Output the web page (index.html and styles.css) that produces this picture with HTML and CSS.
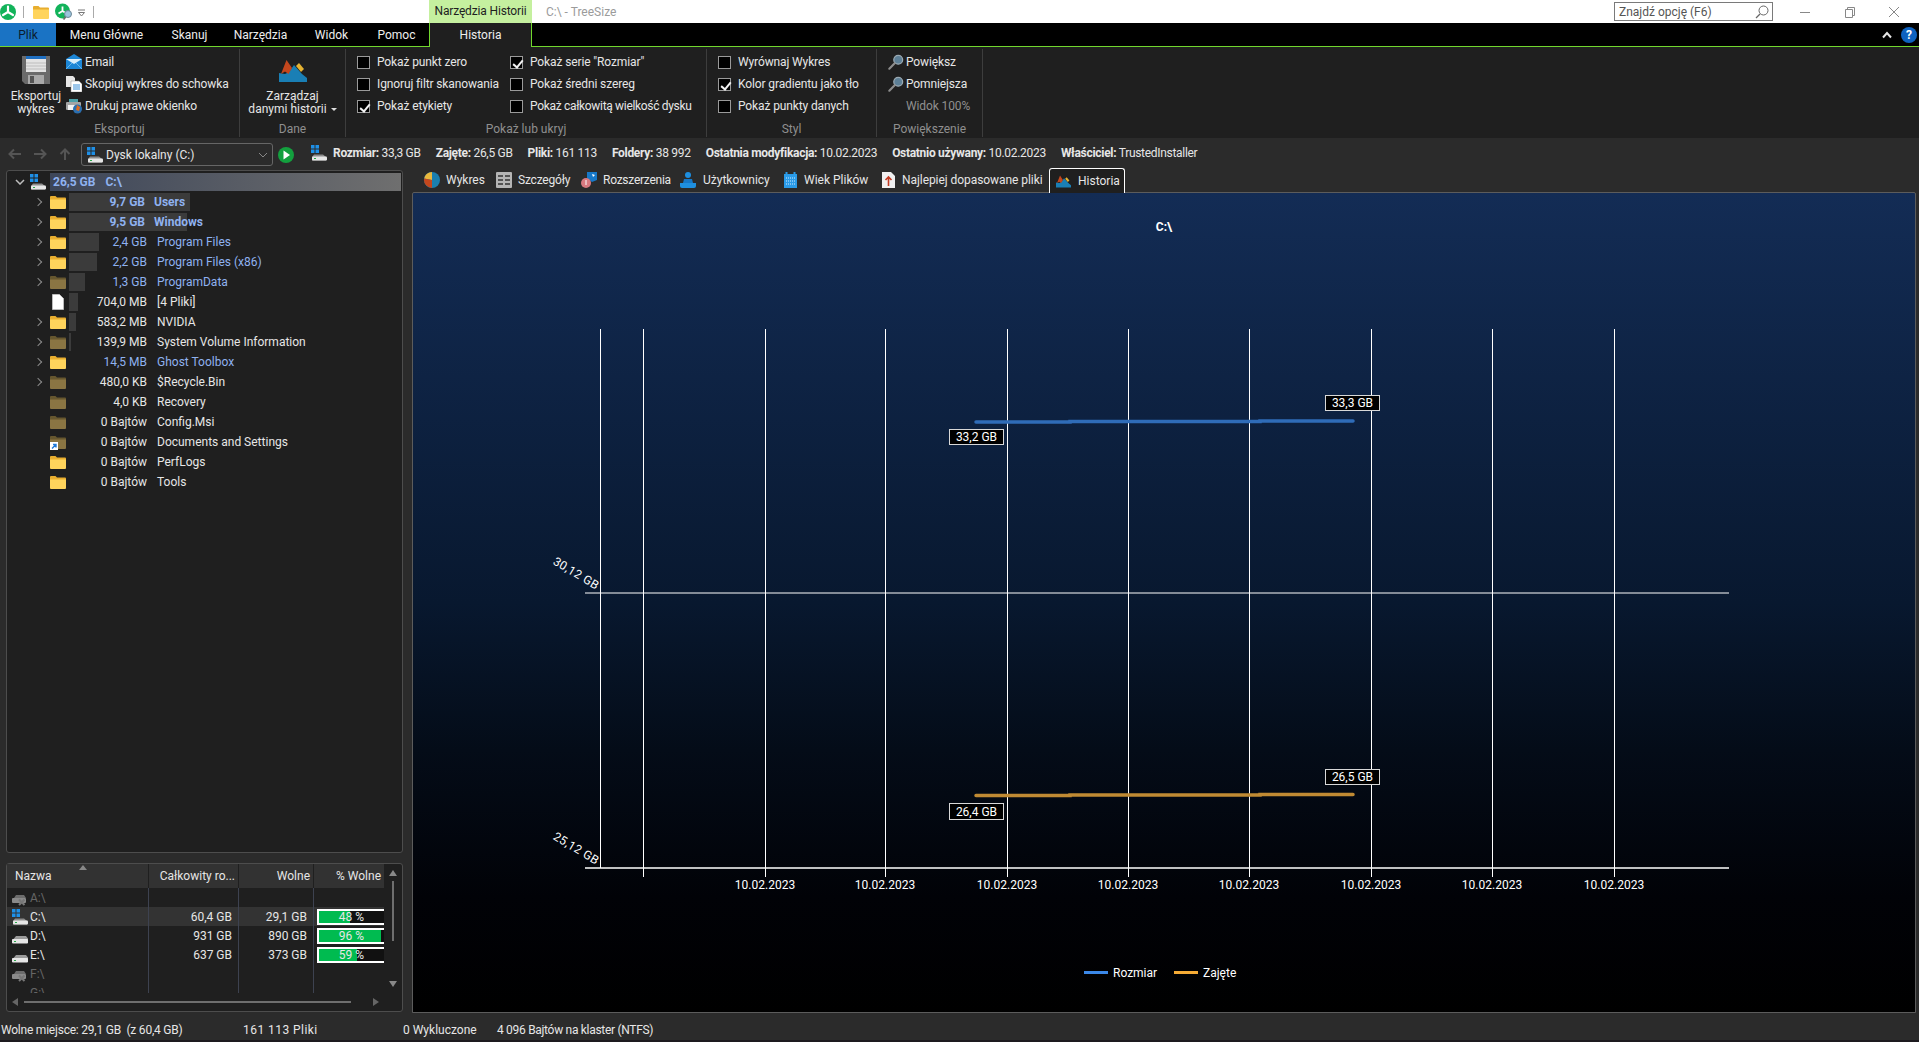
FILE: index.html
```html
<!DOCTYPE html>
<html lang="pl">
  <head>
    <meta charset="UTF-8" />
    <title>C:\ - TreeSize</title>
    <link rel="stylesheet" href="styles.css">
  </head>
  <body>
    <!-- shared icons -->
    <svg class="icon-defs" width="0" height="0">
      <defs>
        <symbol id="i-folder" viewBox="0 0 16 14">
          <path d="M0 2a1 1 0 0 1 1-1h4.500l1.500 1.500h8a1 1 0 0 1 1 1V5H0z" fill="var(--tab)"/>
          <path d="M0 4.500h16V13a1 1 0 0 1-1 1H1a1 1 0 0 1-1-1z" fill="var(--body)"/>
        </symbol>
        <symbol id="i-drive" viewBox="0 0 16 16">
          <path d="M2 10.500 4 8h10l2 2.500V15H0v-3z" fill="#9a9a9a"/>
          <rect x="0" y="11" width="16" height="4.500" rx="1" fill="#e6e6e6"/>
          <rect x="2" y="13" width="2" height="1" fill="#29a84a"/>
        </symbol>
        <symbol id="i-win" viewBox="0 0 16 16">
          <path d="M0 0h3.500v3.500H0zM4.500 0H8v3.500H4.500zM0 4.500h3.500V8H0zM4.500 4.500H8V8H4.500z" fill="#1e90e8"/>
          <path d="M3 9.500h9l3 2.500v3.500H1V12z" fill="#8c8c8c"/>
          <rect x="1" y="11.500" width="15" height="4" rx="1" fill="#e6e6e6"/>
          <rect x="3" y="13" width="2" height="1" fill="#29a84a"/>
        </symbol>
        <symbol id="i-lost" viewBox="0 0 16 16">
          <rect x="0" y="8" width="14" height="5" rx="1" fill="#8a8a8a"/>
          <path d="M2 8 4 5h8l2 3z" fill="#6c6c6c"/>
          <path d="M7 9.500 12.500 15M12.500 9.500 7 15" stroke="#777" stroke-width="2"/>
        </symbol>
        <symbol id="i-lens" viewBox="0 0 18 18">
          <circle cx="11.500" cy="6.500" r="5" fill="#5d7f96" stroke="#9aa9b2" stroke-width="1.400"/>
          <path d="M7.500 10.500 1.500 16.500" stroke="#8d8d8d" stroke-width="2.400" stroke-linecap="round"/>
        </symbol>
        <symbol id="i-peaks" viewBox="0 0 28 22">
          <path d="M0 22V13l6 1 4-2 5-7 8 9 5 4v4z" fill="#1a7fb5"/>
          <path d="M2 14 7.500 0 13 8 9.500 14 6 11.500z" fill="#c4471d"/>
          <path d="M17 6l3-3 5 6-3 3z" fill="#e5b332"/>
        </symbol>
      </defs>
    </svg>

    <header class="title-bar">
      <div class="quick-access">
        <svg class="app-logo" viewBox="0 0 16 16"><circle cx="8" cy="8" r="8" fill="#12b35a"/><path d="M8 2.500v5.500M8 8l-5 3M8 8l5 3" stroke="#fff" stroke-width="2.200" stroke-linecap="round"/></svg>
        <span class="qa-sep"></span>
        <svg class="qa-folder" width="16" height="14"><use href="#i-folder"/></svg>
        <svg class="qa-scan" viewBox="0 0 18 18"><circle cx="7.500" cy="8" r="7.500" fill="#12b35a"/><path d="M7.500 3.500v4.500M7.500 8l-4 2.500M7.500 8l4 2.500" stroke="#fff" stroke-width="1.800"/><circle cx="13" cy="11" r="3.500" fill="#9cc4dd" stroke="#6d8796"/><path d="M10.500 14 8.500 16.500" stroke="#6d6d6d" stroke-width="1.800"/></svg>
        <svg class="qa-more" viewBox="0 0 8 8"><path d="M0 1h7" stroke="#777"/><path d="M.5 3.500h6L3.500 7z" fill="none" stroke="#777"/></svg>
        <span class="qa-sep"></span>
      </div>
      <div class="context-title">Narzędzia Historii</div>
      <div class="window-title">C:\ - TreeSize</div>
      <div class="search-box">
        <span>Znajdź opcję (F6)</span>
        <svg viewBox="0 0 14 14" width="14" height="14"><circle cx="8.500" cy="5.500" r="4.500" fill="none" stroke="#666"/><path d="M5 9 1 13" stroke="#666" stroke-width="1.200"/></svg>
      </div>
      <div class="window-buttons">
        <svg viewBox="0 0 12 12" width="12" height="12"><path d="M1 6.500h10" stroke="#888"/></svg>
        <svg viewBox="0 0 12 12" width="12" height="12"><path d="M1.500 3.500h7v8h-7zM3.500 3.500v-2h7v8h-2" fill="none" stroke="#888"/></svg>
        <svg viewBox="0 0 12 12" width="12" height="12"><path d="M1 1l10 10M11 1 1 11" stroke="#888"/></svg>
      </div>
    </header>

    <nav class="menu-bar">
      <div class="menu-item menu-file">Plik</div>
      <div class="menu-item menu-w1">Menu Główne</div>
      <div class="menu-item menu-w2">Skanuj</div>
      <div class="menu-item menu-w3">Narzędzia</div>
      <div class="menu-item menu-w4">Widok</div>
      <div class="menu-item menu-w5">Pomoc</div>
      <div class="menu-item menu-context">Historia</div>
      <div class="menu-right">
        <svg viewBox="0 0 10 8" width="10" height="8"><path d="M1 6.500 5 2l4 4.500" fill="none" stroke="#e6e6e6" stroke-width="2"/></svg>
        <span class="help-dot">?</span>
      </div>
    </nav>

    <section class="ribbon">
      <div class="rb-group rb-export">
        <div class="rb-body">
          <div class="rb-big">
            <svg class="big-icon" viewBox="0 0 30 30" width="30" height="30">
              <path d="M1 1h28v28H4l-3-3z" fill="#6b6b6b"/>
              <rect x="5" y="1" width="20" height="3" fill="#1f6fc0"/>
              <rect x="5" y="4" width="20" height="13" fill="#e3e3e3"/>
              <path d="M5 8h20M5 11h20M5 14h20" stroke="#bdbdbd"/>
              <rect x="7" y="20" width="16" height="9" fill="#a9a9a9"/>
              <rect x="9" y="21" width="4" height="7" fill="#555"/>
            </svg>
            <span>Eksportuj</span>
            <span>wykres</span>
          </div>
          <div class="rb-list">
            <div class="rb-line">
              <svg viewBox="0 0 16 16" width="16" height="16"><path d="M0 5 8 0l8 5v10H0z" fill="#1c86d6"/><path d="M0 5h16L8 10z" fill="#d9eefb"/><path d="M0 15l6-6M16 15l-6-6" stroke="#64b4ea"/></svg>
              <span>Email</span>
            </div>
            <div class="rb-line">
              <svg viewBox="0 0 16 16" width="16" height="16"><path d="M0 0h7l2 2v9H0z" fill="#e6e6e6"/><path d="M5 5h8l3 3v8H5z" fill="#fff" stroke="#888" stroke-width=".5"/><path d="M7 9h7M7 11h7M7 13h7" stroke="#3a8fd8"/></svg>
              <span>Skopiuj wykres do schowka</span>
            </div>
            <div class="rb-line">
              <svg viewBox="0 0 16 16" width="16" height="16"><rect x="3" y="1" width="9" height="4" fill="#4ba0a8"/><rect x="0" y="4" width="15" height="8" rx="1" fill="#a5a5a5"/><rect x="2" y="7" width="8" height="5" fill="#f2f2f2"/><circle cx="11.500" cy="11" r="4.500" fill="#2b6fb0"/><path d="M11 7l3 2-1 4-3-1z" fill="#de6b1f"/></svg>
              <span>Drukuj prawe okienko</span>
            </div>
          </div>
        </div>
        <div class="rb-label">Eksportuj</div>
      </div>

      <div class="rb-group rb-data">
        <div class="rb-body">
          <div class="rb-big rb-big-wide">
            <svg class="big-icon peaks" width="28" height="22"><use href="#i-peaks"/></svg>
            <span>Zarządzaj</span>
            <span>danymi historii <i class="caret"></i></span>
          </div>
        </div>
        <div class="rb-label">Dane</div>
      </div>

      <div class="rb-group rb-show">
        <div class="rb-body rb-checks">
          <div class="rb-list check-col1">
            <div class="rb-line"><i class="check"></i>Pokaż punkt zero</div>
            <div class="rb-line"><i class="check"></i>Ignoruj filtr skanowania</div>
            <div class="rb-line"><i class="check on"></i>Pokaż etykiety</div>
          </div>
          <div class="rb-list">
            <div class="rb-line"><i class="check on"></i>Pokaż serie "Rozmiar"</div>
            <div class="rb-line"><i class="check"></i>Pokaż średni szereg</div>
            <div class="rb-line rb-tight"><i class="check"></i>Pokaż całkowitą wielkość dysku</div>
          </div>
        </div>
        <div class="rb-label">Pokaż lub ukryj</div>
      </div>

      <div class="rb-group rb-style">
        <div class="rb-body rb-checks">
          <div class="rb-list">
            <div class="rb-line"><i class="check"></i>Wyrównaj Wykres</div>
            <div class="rb-line"><i class="check on"></i>Kolor gradientu jako tło</div>
            <div class="rb-line"><i class="check"></i>Pokaż punkty danych</div>
          </div>
        </div>
        <div class="rb-label">Styl</div>
      </div>

      <div class="rb-group rb-zoom">
        <div class="rb-body rb-checks">
          <div class="rb-list">
            <div class="rb-line"><svg class="lens" width="16" height="16"><use href="#i-lens"/></svg>Powiększ</div>
            <div class="rb-line"><svg class="lens" width="16" height="16"><use href="#i-lens"/></svg>Pomniejsza</div>
            <div class="rb-line rb-dim">Widok 100%</div>
          </div>
        </div>
        <div class="rb-label">Powiększenie</div>
      </div>
    </section>

    <section class="address-bar">
      <div class="nav-arrows">
        <svg viewBox="0 0 14 12" width="14" height="12"><path d="M13 6H2M6 1.500 1.500 6 6 10.500" fill="none" stroke="#555" stroke-width="2"/></svg>
        <svg viewBox="0 0 14 12" width="14" height="12"><path d="M1 6h11M8 1.500 12.500 6 8 10.500" fill="none" stroke="#555" stroke-width="2"/></svg>
        <svg viewBox="0 0 14 12" width="14" height="12"><path d="M7 12V2M2.500 6 7 1.500 11.500 6" fill="none" stroke="#555" stroke-width="2"/></svg>
      </div>
      <div class="drive-select">
        <svg width="16" height="16"><use href="#i-win"/></svg>
        <span>Dysk lokalny (C:)</span>
        <svg class="chevron" viewBox="0 0 10 6" width="10" height="6"><path d="M1 1l4 4 4-4" fill="none" stroke="#888"/></svg>
      </div>
      <svg class="go-btn" viewBox="0 0 16 16" width="16" height="16"><circle cx="8" cy="8" r="8" fill="#13a03e"/><path d="M5.500 3.500 12 8l-6.500 4.500z" fill="#fff"/></svg>
      <div class="drive-info">
        <svg width="16" height="16"><use href="#i-win"/></svg>
        <span><b>Rozmiar:</b> 33,3 GB</span>
        <span><b>Zajęte:</b> 26,5 GB</span>
        <span><b>Pliki:</b> 161 113</span>
        <span><b>Foldery:</b> 38 992</span>
        <span><b>Ostatnia modyfikacja:</b> 10.02.2023</span>
        <span><b>Ostatnio używany:</b> 10.02.2023</span>
        <span><b>Właściciel:</b> TrustedInstaller</span>
      </div>
    </section>

    <main class="workspace">
      <aside class="left-pane">
        <div class="tree-panel">
          <div class="tree-root">
            <svg class="chevron-down" viewBox="0 0 10 6" width="10" height="6"><path d="M1 1l4 4 4-4" fill="none" stroke="#bdbdbd" stroke-width="1.500"/></svg>
            <svg class="root-drive" width="16" height="16"><use href="#i-win"/></svg>
            <div class="root-label"><span>26,5 GB</span><span>C:\</span></div>
          </div>
          <div class="tree-row big blue"><i class="exp"></i><svg class="folder" width="16" height="14"><use href="#i-folder"/></svg><div class="row-data"><i class="bar" style="width:121px"></i><span class="size">9,7 GB</span><span class="name">Users</span></div></div>
          <div class="tree-row big blue"><i class="exp"></i><svg class="folder" width="16" height="14"><use href="#i-folder"/></svg><div class="row-data"><i class="bar" style="width:118px"></i><span class="size">9,5 GB</span><span class="name">Windows</span></div></div>
          <div class="tree-row blue"><i class="exp"></i><svg class="folder" width="16" height="14"><use href="#i-folder"/></svg><div class="row-data"><i class="bar" style="width:30px"></i><span class="size">2,4 GB</span><span class="name">Program Files</span></div></div>
          <div class="tree-row blue"><i class="exp"></i><svg class="folder" width="16" height="14"><use href="#i-folder"/></svg><div class="row-data"><i class="bar" style="width:28px"></i><span class="size">2,2 GB</span><span class="name">Program Files (x86)</span></div></div>
          <div class="tree-row blue"><i class="exp"></i><svg class="folder dim" width="16" height="14"><use href="#i-folder"/></svg><div class="row-data"><i class="bar" style="width:16px"></i><span class="size">1,3 GB</span><span class="name">ProgramData</span></div></div>
          <div class="tree-row"><i class="exp none"></i><svg class="folder" viewBox="0 0 12 16" width="16" height="16"><path d="M.5.500h7l4 4v11H.5z" fill="#fff" stroke="#bbb"/></svg><div class="row-data"><i class="bar" style="width:9px"></i><span class="size">704,0 MB</span><span class="name">[4 Pliki]</span></div></div>
          <div class="tree-row"><i class="exp"></i><svg class="folder" width="16" height="14"><use href="#i-folder"/></svg><div class="row-data"><i class="bar" style="width:7px"></i><span class="size">583,2 MB</span><span class="name">NVIDIA</span></div></div>
          <div class="tree-row"><i class="exp"></i><svg class="folder dim" width="16" height="14"><use href="#i-folder"/></svg><div class="row-data"><i class="bar" style="width:2px"></i><span class="size">139,9 MB</span><span class="name">System Volume Information</span></div></div>
          <div class="tree-row blue"><i class="exp"></i><svg class="folder" width="16" height="14"><use href="#i-folder"/></svg><div class="row-data"><span class="size">14,5 MB</span><span class="name">Ghost Toolbox</span></div></div>
          <div class="tree-row"><i class="exp"></i><svg class="folder dim" width="16" height="14"><use href="#i-folder"/></svg><div class="row-data"><span class="size">480,0 KB</span><span class="name">$Recycle.Bin</span></div></div>
          <div class="tree-row"><i class="exp none"></i><svg class="folder dim" width="16" height="14"><use href="#i-folder"/></svg><div class="row-data"><span class="size">4,0 KB</span><span class="name">Recovery</span></div></div>
          <div class="tree-row"><i class="exp none"></i><svg class="folder dim" width="16" height="14"><use href="#i-folder"/></svg><div class="row-data"><span class="size">0 Bajtów</span><span class="name">Config.Msi</span></div></div>
          <div class="tree-row"><i class="exp none"></i><span class="link-folder"><svg class="folder dim" width="16" height="14"><use href="#i-folder"/></svg><svg class="link-badge" viewBox="0 0 8 8"><rect width="8" height="8" fill="#fff"/><path d="M2 6.500 5.500 3M3 2.500h3v3" fill="none" stroke="#1e78d8" stroke-width="1.400"/></svg></span><div class="row-data"><span class="size">0 Bajtów</span><span class="name">Documents and Settings</span></div></div>
          <div class="tree-row"><i class="exp none"></i><svg class="folder" width="16" height="14"><use href="#i-folder"/></svg><div class="row-data"><span class="size">0 Bajtów</span><span class="name">PerfLogs</span></div></div>
          <div class="tree-row"><i class="exp none"></i><svg class="folder" width="16" height="14"><use href="#i-folder"/></svg><div class="row-data"><span class="size">0 Bajtów</span><span class="name">Tools</span></div></div>
        </div>

        <div class="drives-panel">
          <div class="drives-main">
            <div class="drives-table">
              <div class="drive-row drive-head">
                <div class="cell cell-name">Nazwa<i class="sort-mark"></i></div>
                <div class="cell num">Całkowity ro...</div>
                <div class="cell num">Wolne</div>
                <div class="cell num">% Wolne</div>
              </div>
              <div class="drive-row off">
                <div class="cell cell-name"><svg width="16" height="16"><use href="#i-lost"/></svg>A:\</div>
                <div class="cell num"></div><div class="cell num"></div><div class="cell"></div>
              </div>
              <div class="drive-row current">
                <div class="cell cell-name"><svg width="16" height="16"><use href="#i-win"/></svg>C:\</div>
                <div class="cell num">60,4 GB</div><div class="cell num">29,1 GB</div>
                <div class="cell cell-pct"><div class="pct"><i style="width:48%"></i><span>48 %</span></div></div>
              </div>
              <div class="drive-row">
                <div class="cell cell-name"><svg width="16" height="16"><use href="#i-drive"/></svg>D:\</div>
                <div class="cell num">931 GB</div><div class="cell num">890 GB</div>
                <div class="cell cell-pct"><div class="pct"><i style="width:96%"></i><span>96 %</span></div></div>
              </div>
              <div class="drive-row">
                <div class="cell cell-name"><svg width="16" height="16"><use href="#i-drive"/></svg>E:\</div>
                <div class="cell num">637 GB</div><div class="cell num">373 GB</div>
                <div class="cell cell-pct"><div class="pct"><i style="width:59%"></i><span>59 %</span></div></div>
              </div>
              <div class="drive-row off">
                <div class="cell cell-name"><svg width="16" height="16"><use href="#i-lost"/></svg>F:\</div>
                <div class="cell num"></div><div class="cell num"></div><div class="cell"></div>
              </div>
              <div class="drive-row off">
                <div class="cell cell-name"><svg width="16" height="16"><use href="#i-drive"/></svg>G:\</div>
                <div class="cell num"></div><div class="cell num"></div><div class="cell"></div>
              </div>
            </div>
            <div class="v-scroll">
              <i class="tri tri-up"></i>
              <div class="v-track"><i class="v-thumb"></i></div>
              <i class="tri tri-down"></i>
            </div>
          </div>
          <div class="h-scroll">
            <i class="tri tri-left"></i>
            <i class="h-thumb"></i>
            <i class="tri tri-right"></i>
          </div>
        </div>
      </aside>

      <div class="right-pane">
        <div class="tabs">
          <div class="tab tab-w1"><svg viewBox="0 0 16 16" width="16" height="16"><circle cx="8" cy="8" r="8" fill="#1b7fae"/><path d="M8 8V0A8 8 0 0 0 .2 6.500z" fill="#eab83c"/><path d="M8 8 .2 6.500A8 8 0 0 0 8 16z" fill="#c4471d"/></svg>Wykres</div>
          <div class="tab tab-w2"><svg viewBox="0 0 16 16" width="16" height="16"><rect width="16" height="16" rx="1" fill="#b5b5b5"/><path d="M2 4h5M9 4h5M2 8h5M9 8h5M2 12h5M9 12h5" stroke="#333" stroke-width="1.500"/></svg>Szczegóły</div>
          <div class="tab tab-w3"><svg viewBox="0 0 16 16" width="16" height="16"><path d="M6 0h10v8l-5 2-5-4z" fill="#1678c8"/><path d="M11 2l3 1-2 2z" fill="#fff"/><circle cx="5" cy="11" r="5" fill="#d97a80"/><path d="M5 8v5" stroke="#fff"/></svg>Rozszerzenia</div>
          <div class="tab tab-w4"><svg viewBox="0 0 16 16" width="16" height="16"><circle cx="8" cy="3" r="3" fill="#1e8fe0"/><path d="M4 7h8l1 4H3z" fill="#1678c8"/><path d="M0 11h16v3a2 2 0 0 1-2 2H2a2 2 0 0 1-2-2z" fill="#1e8fe0"/></svg>Użytkownicy</div>
          <div class="tab tab-w5"><svg viewBox="0 0 13 16" width="13" height="16"><rect y="2" width="13" height="14" fill="#2a9be8"/><path d="M2.500 0v3M10.500 0v3" stroke="#2a9be8" stroke-width="2"/><path d="M2 6h9M2 9h9M2 12h9" stroke="#cfeaff" stroke-dasharray="1 1"/></svg>Wiek Plików</div>
          <div class="tab tab-w6"><svg viewBox="0 0 13 16" width="13" height="16"><path d="M0 0h9l4 4v12H0z" fill="#f0f0f0"/><path d="M6.500 14V5M3.500 8l3-3 3 3" fill="none" stroke="#c43a22" stroke-width="1.600"/></svg>Najlepiej dopasowane pliki</div>
          <div class="tab tab-active"><svg width="15" height="13"><use href="#i-peaks"/></svg>Historia</div>
        </div>

        <div class="chart-panel">
          <svg class="chart" viewBox="413 193 1502 819" preserveAspectRatio="none">
            <text class="chart-title" x="1164" y="231">C:\</text>

            <g class="grid">
              <path d="M600.500 329V868"/>
              <path d="M643.500 329V877"/>
              <path d="M765.500 329V877"/>
              <path d="M885.500 329V877"/>
              <path d="M1007.500 329V877"/>
              <path d="M1128.500 329V877"/>
              <path d="M1249.500 329V877"/>
              <path d="M1371.500 329V877"/>
              <path d="M1492.500 329V877"/>
              <path d="M1614.500 329V877"/>
              <path d="M585 593H1729"/>
              <path class="axis" d="M585 868H1729"/>
            </g>

            <text class="axis-y" transform="translate(596 590) rotate(31)">30,12 GB</text>
            <text class="axis-y" transform="translate(596 865) rotate(31)">25,12 GB</text>

            <g class="axis-x">
              <text x="765" y="889">10.02.2023</text>
              <text x="885" y="889">10.02.2023</text>
              <text x="1007" y="889">10.02.2023</text>
              <text x="1128" y="889">10.02.2023</text>
              <text x="1249" y="889">10.02.2023</text>
              <text x="1371" y="889">10.02.2023</text>
              <text x="1492" y="889">10.02.2023</text>
              <text x="1614" y="889">10.02.2023</text>
            </g>

            <polyline class="series s-size" points="976,422 1070,422 1070,421.500 1260,421.500 1260,421 1353,421"/>
            <polyline class="series s-used" points="976,795.500 1070,795.500 1070,795 1260,795 1260,794.500 1353,794.500"/>

            <g class="point-label">
              <rect x="949.500" y="429.500" width="54" height="15"/><text x="976.500" y="441">33,2 GB</text>
              <rect x="1325.500" y="395.500" width="54" height="15"/><text x="1352.500" y="407">33,3 GB</text>
              <rect x="949.500" y="803.500" width="54" height="16"/><text x="976.500" y="815.500">26,4 GB</text>
              <rect x="1325.500" y="769.500" width="54" height="15"/><text x="1352.500" y="781">26,5 GB</text>
            </g>

            <g class="legend">
              <rect class="lg-size" x="1084" y="971" width="24" height="3"/>
              <text x="1113" y="977">Rozmiar</text>
              <rect class="lg-used" x="1174" y="971" width="24" height="3"/>
              <text x="1203" y="977">Zajęte</text>
            </g>
          </svg>
        </div>
      </div>
    </main>

    <footer class="status-bar">
      <span class="st-free">Wolne miejsce: 29,1 GB&nbsp; (z 60,4 GB)</span>
      <span class="st-files">161 113 Pliki</span>
      <span class="st-excl">0 Wykluczone</span>
      <span class="st-cluster">4 096 Bajtów na klaster (NTFS)</span>
    </footer>
  </body>
</html>
```

FILE: styles.css
```css
/* General Reset */
* {
  margin: 0;
  padding: 0;
  box-sizing: border-box;
}

body {
  width: 1919px;
  height: 1042px;
  overflow: hidden;
  display: flex;
  flex-direction: column;
  background: #2b2b2b;
  color: #e6e6e6;
  font-family: Roboto, "Liberation Sans", sans-serif;
  font-size: 12px;
  line-height: 16px;
}

i {
  font-style: normal;
  display: block;
}

.icon-defs {
  position: absolute;
}

/* Title bar */
.title-bar {
  height: 23px;
  flex: none;
  display: flex;
  align-items: center;
  background: #fff;
  color: #333;
}

.quick-access {
  width: 429px;
  display: flex;
  align-items: center;
}

.app-logo {
  width: 16px;
  height: 16px;
  margin-right: 7px;
}

.qa-sep {
  width: 1px;
  height: 12px;
  background: #aaa;
}

.qa-folder {
  margin-left: 9px;
  --tab: #e8ae2f;
  --body: #ffd45c;
}

.qa-scan {
  width: 18px;
  height: 18px;
  margin-left: 6px;
}

.qa-more {
  width: 8px;
  height: 8px;
  margin: 3px 7px 0 5px;
}

.context-title {
  width: 103px;
  height: 23px;
  background: #c5f09f;
  color: #1f1f1f;
  text-align: center;
  line-height: 22px;
  letter-spacing: -0.15px;
}

.window-title {
  margin-left: 14px;
  flex: 1;
  color: #9b9b9b;
}

.search-box {
  width: 159px;
  height: 19px;
  border: 1px solid #7a7a7a;
  padding: 0 3px 0 4px;
  display: flex;
  align-items: center;
  justify-content: space-between;
  color: #555;
}

.window-buttons {
  width: 146px;
  padding: 0 19px 0 26px;
  display: flex;
  justify-content: space-between;
}

/* Menu bar */
.menu-bar {
  height: 24px;
  flex: none;
  display: flex;
  background: #000;
  border-bottom: 1px solid #71d72e;
  color: #eee;
}

.menu-item {
  text-align: center;
  line-height: 24px;
}

.menu-file {
  width: 56px;
  background: #1a73c4;
  color: #0a1c2e;
}

.menu-w1 { width: 101px; }
.menu-w2 { width: 65px; }
.menu-w3 { width: 77px; }
.menu-w4 { width: 65px; }
.menu-w5 { width: 65px; }

.menu-context {
  width: 103px;
  height: 24px;
  background: #1f1f1f;
  border: 1px solid #71d72e;
  border-width: 0 1px;
}

.menu-right {
  flex: 1;
  display: flex;
  justify-content: flex-end;
  align-items: center;
  gap: 9px;
  padding-right: 2px;
}

.help-dot {
  width: 16px;
  height: 16px;
  border-radius: 50%;
  background: #0e62c0;
  color: #fff;
  text-align: center;
  font-weight: 700;
  line-height: 16px;
}

/* Ribbon */
.ribbon {
  height: 91px;
  flex: none;
  display: flex;
  background: #1f1f1f;
}

.rb-group {
  display: flex;
  flex-direction: column;
  border-right: 1px solid #3d3d3d;
  margin: 2px 0 1px;
}

.rb-export { width: 240px; }
.rb-data { width: 106px; }
.rb-show { width: 361px; }
.rb-style { width: 170px; }
.rb-zoom { width: 106px; }

.rb-body {
  flex: 1;
  min-height: 0;
  display: flex;
  padding-top: 2px;
}

.rb-label {
  height: 15px;
  flex: none;
  text-align: center;
  color: #8f8f8f;
  line-height: 15px;
}

.rb-big {
  width: 72px;
  padding-top: 4px;
  display: flex;
  flex-direction: column;
  align-items: center;
  line-height: 13px;
}

.rb-big-wide {
  width: 100%;
  padding-top: 9px;
}

.big-icon {
  margin-bottom: 5px;
}

.peaks {
  margin-bottom: 8px;
}

.caret {
  display: inline-block;
  width: 0;
  height: 0;
  margin: 0 0 2px 1px;
  border: 3px solid transparent;
  border-top-color: #ddd;
  border-bottom-width: 0;
}

.rb-list {
  display: flex;
  flex-direction: column;
  margin-left: -6px;
}

.rb-line {
  height: 22px;
  display: flex;
  align-items: center;
  gap: 3px;
  white-space: nowrap;
  letter-spacing: -0.12px;
}

.rb-tight {
  letter-spacing: -0.32px;
}

.rb-checks {
  padding-left: 11px;
}

.rb-checks .rb-list {
  margin-left: 0;
}

.check-col1 {
  width: 153px;
}

.check {
  width: 13px;
  height: 13px;
  margin-right: 4px;
  border: 1px solid #9a9a9a;
  background: #000;
  position: relative;
}

.check.on::after {
  content: "";
  position: absolute;
  left: 4px;
  top: 1px;
  width: 4px;
  height: 8px;
  border: solid #f2f2f2;
  border-width: 0 2px 2px 0;
  transform: rotate(40deg);
}

.lens {
  margin-right: -1px;
}

.rb-dim {
  padding-left: 18px;
  color: #8f8f8f;
}

/* Address bar */
.address-bar {
  height: 28px;
  flex: none;
  display: flex;
  align-items: center;
  padding-top: 3px;
}

.nav-arrows {
  width: 81px;
  padding: 0 9px 0 8px;
  display: flex;
  justify-content: space-between;
}

.drive-select {
  width: 192px;
  height: 23px;
  margin-top: 2px;
  padding: 0 4px 0 5px;
  display: flex;
  align-items: center;
  gap: 3px;
  border: 1px solid #666;
  border-radius: 3px;
}

.drive-select .chevron {
  margin-left: auto;
}

.go-btn {
  margin: 2px 17px 0 5px;
}

.drive-info {
  display: flex;
  align-items: center;
  gap: 15px;
  margin-top: -2px;
  letter-spacing: -0.3px;
}

.drive-info svg {
  margin-right: -9px;
}

/* Workspace */
.workspace {
  flex: 1;
  min-height: 0;
  display: flex;
}

.left-pane {
  width: 412px;
  flex: none;
  padding: 4px 9px 0 6px;
  display: flex;
  flex-direction: column;
  gap: 10px;
}

.tree-panel {
  height: 683px;
  flex: none;
  padding: 1px 0 0;
  border: 1px solid #4d4d4d;
  border-radius: 3px;
  background: #1f1f1f;
}

.tree-root {
  height: 20px;
  display: flex;
  align-items: center;
}

.chevron-down {
  margin-left: 8px;
}

.root-drive {
  margin-left: 5px;
}

.root-label {
  flex: 1;
  height: 18px;
  margin: 0 1px 0 4px;
  padding-left: 3px;
  display: flex;
  gap: 10px;
  background: linear-gradient(90deg, #3d4659, #6f6f6f);
  color: #8fb2f0;
  font-weight: 700;
  line-height: 18px;
}

.tree-row {
  height: 20px;
  display: flex;
  align-items: center;
  white-space: nowrap;
}

.exp {
  width: 6px;
  height: 6px;
  margin: 0 9px 0 28px;
  border: solid #8a8a8a;
  border-width: 1.5px 1.5px 0 0;
  transform: rotate(45deg);
}

.exp.none {
  border: 0;
}

.folder {
  --tab: #e8ae2f;
  --body: #ffd45c;
}

.folder.dim {
  --tab: #66572f;
  --body: #8a7543;
}

.link-folder {
  position: relative;
  height: 14px;
}

.link-badge {
  position: absolute;
  left: 0;
  bottom: -1px;
  width: 8px;
  height: 8px;
}

.row-data {
  position: relative;
  margin-left: 3px;
  height: 18px;
  flex: 1;
  display: flex;
  line-height: 18px;
}

.bar {
  position: absolute;
  left: 0;
  top: 0;
  height: 18px;
  background: #3b3b3b;
}

.size {
  position: relative;
  width: 78px;
  text-align: right;
}

.name {
  position: relative;
  margin-left: 10px;
}

.tree-row.blue {
  color: #8fb2f0;
}

.tree-row.big {
  font-weight: 700;
}

.tree-row.big .size {
  width: 76px;
}

.tree-row.big .name {
  margin-left: 9px;
}

/* Drives table */
.drives-panel {
  height: 149px;
  flex: none;
  border: 1px solid #4d4d4d;
  border-radius: 3px;
  background: #1f1f1f;
  display: flex;
  flex-direction: column;
}

.drives-main {
  height: 129px;
  display: flex;
}

.drives-table {
  width: 377px;
  height: 129px;
  overflow: hidden;
}

.drive-row {
  height: 19px;
  display: grid;
  grid-template-columns: 142px 90px 75px 70px;
}

.drive-head {
  height: 24px;
  background: #323232;
}

.drive-row.current {
  background: #333;
}

.cell {
  display: flex;
  align-items: center;
  gap: 2px;
  min-width: 0;
  padding: 0 6px 0 5px;
  border-right: 1px solid #3d4250;
  white-space: nowrap;
  position: relative;
}

.cell:last-child {
  border-right: 0;
  padding: 0 0 0 3px;
}

.cell.num {
  justify-content: flex-end;
}

.drive-head .cell {
  padding-right: 3px;
  border-right-color: #1f1f1f;
}

.drive-head .cell-name {
  padding-left: 8px;
}

.off {
  color: #666;
}

.sort-mark {
  position: absolute;
  left: 72px;
  top: 1px;
  border: 4.5px solid transparent;
  border-top: 0;
  border-bottom: 5px solid #888;
}

.cell-pct {
  align-items: center;
}

.pct {
  position: relative;
  width: 100%;
  height: 16px;
  border: 2px solid #fff;
  border-right: 0;
  background: #111;
  text-align: center;
  line-height: 12px;
}

.pct i {
  position: absolute;
  left: 0;
  top: 0;
  bottom: 0;
  background: #00bb50;
}

.pct span {
  position: relative;
}

.v-scroll {
  flex: 1;
  display: flex;
  flex-direction: column;
  align-items: center;
  padding-top: 6px;
}

.v-track {
  flex: 1;
  width: 2px;
  margin: 5px 0;
}

.v-thumb {
  height: 60px;
  background: #6e6e6e;
}

.tri {
  width: 0;
  height: 0;
  border: 4px solid transparent;
}

.tri-up {
  border-top: 0;
  border-bottom: 6px solid #888;
}

.tri-down {
  margin-bottom: 6px;
  border-bottom: 0;
  border-top: 6px solid #888;
}

.tri-left {
  border-left: 0;
  border-right: 6px solid #666;
}

.tri-right {
  border-right: 0;
  border-left: 6px solid #666;
}

.h-scroll {
  flex: 1;
  padding: 0 21px 0 5px;
  display: flex;
  align-items: center;
}

.h-thumb {
  width: 327px;
  height: 2px;
  margin: 0 22px 0 6px;
  background: #6e6e6e;
}

/* Tabs and chart */
.right-pane {
  flex: 1;
  min-width: 0;
  padding-right: 3px;
  display: flex;
  flex-direction: column;
}

.tabs {
  height: 26px;
  flex: none;
  display: flex;
  align-items: center;
  padding-left: 11px;
  padding-top: 2px;
  white-space: nowrap;
}

.tab {
  display: flex;
  align-items: center;
  gap: 6px;
}

.tab-w1 { width: 73px; padding-left: 1px; }
.tab-w2 { width: 85px; letter-spacing: -0.2px; }
.tab-w3 { width: 99px; letter-spacing: -0.25px; }
.tab-w4 { width: 104px; gap: 7px; }
.tab-w5 { width: 98px; gap: 7px; }
.tab-w6 { width: 167px; gap: 7px; letter-spacing: -0.06px; }

.tab-active {
  width: 76px;
  height: 25px;
  margin-top: 1px;
  padding-left: 6px;
  gap: 7px;
  background: #1f1f1f;
  border: 1px solid #fff;
  border-bottom: 0;
  border-radius: 3px 3px 0 0;
  position: relative;
  z-index: 1;
}

.chart-panel {
  height: 821px;
  flex: none;
  border: 1px solid #5c5c5c;
  border-radius: 2px 2px 0 0;
  background: linear-gradient(180deg, #132c55 0%, #08182f 50%, #040c18 68%, #010207 86%, #000 100%);
}

.chart {
  display: block;
  width: 100%;
  height: 100%;
}

.chart text {
  fill: #fff;
  font-family: Roboto, "Liberation Sans", sans-serif;
  font-size: 12px;
}

.chart .chart-title {
  font-weight: 700;
  text-anchor: middle;
}

.grid path {
  stroke: #fff;
  stroke-width: 1;
  fill: none;
}

.grid .axis {
  stroke-width: 1.5;
}

.chart .axis-y {
  text-anchor: end;
  letter-spacing: 0.4px;
}

.axis-x text {
  text-anchor: middle;
}

.series {
  fill: none;
  stroke-width: 3.5;
  stroke-linecap: round;
}

.s-size {
  stroke: #2f6cb8;
}

.s-used {
  stroke: #c08a33;
}

.point-label rect {
  fill: #000;
  stroke: #d8d8d8;
  stroke-width: 1;
}

.point-label text {
  text-anchor: middle;
}

.lg-size {
  fill: #3b88e8;
}

.lg-used {
  fill: #f5ab35;
}

/* Status bar */
.status-bar {
  height: 29px;
  flex: none;
  display: flex;
  align-items: center;
  padding: 6px 0 0 1px;
  white-space: nowrap;
  border-bottom: 2px solid #1d1a1f;
}

.st-free { width: 242px; letter-spacing: -0.22px; }
.st-files { width: 160px; letter-spacing: 0.45px; }
.st-excl { width: 94px; }
.st-cluster { letter-spacing: -0.3px; }
```
